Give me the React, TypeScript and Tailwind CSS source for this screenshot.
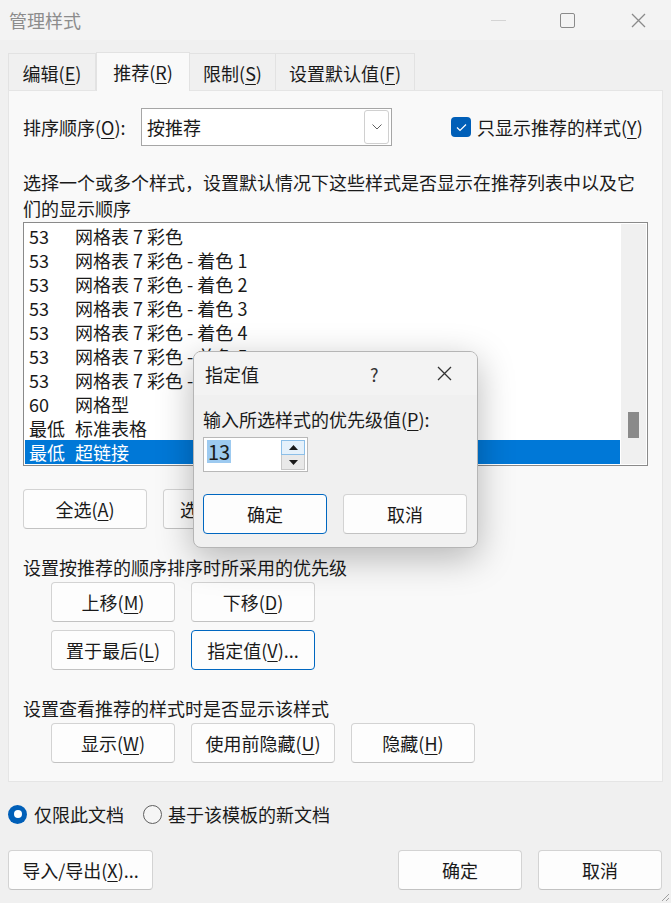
import type { ReactNode } from "react"

const font = "font-['Noto_Sans_CJK_SC','Noto_Sans',sans-serif]"

function Key({ children }: { children: ReactNode }) {
  return <span className="underline decoration-1 underline-offset-[3px]">{children}</span>
}

function Btn({
  children,
  className = "",
  focused = false,
}: {
  children: ReactNode
  className?: string
  focused?: boolean
}) {
  return (
    <div
      className={`flex h-[40px] shrink-0 items-center justify-center rounded-[4px] border bg-[#fdfdfd] text-[18px] leading-[26px] text-[#1a1a1a] ${
        focused ? "border-[#0067c0]" : "border-[#d3d3d3] border-b-[#c2c2c2]"
      } ${className}`}
    >
      {children}
    </div>
  )
}

const tabs = [
  { label: "编辑", key: "E", w: "w-[88px]" },
  { label: "推荐", key: "R", w: "w-[94px]", active: true },
  { label: "限制", key: "S", w: "w-[87px]" },
  { label: "设置默认值", key: "F", w: "w-[140px]" },
]

const rows = [
  { n: "53", name: "网格表 7 彩色" },
  { n: "53", name: "网格表 7 彩色 - 着色 1" },
  { n: "53", name: "网格表 7 彩色 - 着色 2" },
  { n: "53", name: "网格表 7 彩色 - 着色 3" },
  { n: "53", name: "网格表 7 彩色 - 着色 4" },
  { n: "53", name: "网格表 7 彩色 - 着色 5" },
  { n: "53", name: "网格表 7 彩色 - 着色 6" },
  { n: "60", name: "网格型" },
  { n: "最低", name: "标准表格" },
  { n: "最低", name: "超链接", selected: true },
]

export default function App() {
  return (
    <div className={`relative flex h-[903px] w-[671px] flex-col overflow-hidden bg-[#f0f0f0] text-[#1a1a1a] ${font}`}>
      {/* Title bar */}
      <div className="flex h-[40px] shrink-0 items-center bg-[#f3f3f3]">
        <span className="pl-[9px] text-[18px] leading-[26px] text-[#8c8c8c]">管理样式</span>
        <div className="ml-auto flex h-full items-center">
          <div className="mr-[54px] h-px w-[15px] bg-[#d4d4d4]" />
          <div className="mr-[56px] h-[15px] w-[15px] rounded-[2px] border-[1.5px] border-[#8a8a8a]" />
          <svg width="15" height="15" viewBox="0 0 15 15" className="mr-[25px]">
            <path d="M1 1L14 14M14 1L1 14" stroke="#8a8a8a" strokeWidth="1.3" />
          </svg>
        </div>
      </div>

      {/* Tabs */}
      <div className="ml-[8px] mt-[12px] flex h-[38px] shrink-0 items-end">
        {tabs.map((t) =>
          t.active ? (
            <div
              key={t.key}
              className={`relative z-10 -mb-px flex h-[39px] items-center justify-center border border-b-0 border-[#e2e2e2] bg-[#f9f9f9] text-[18px] leading-[26px] ${t.w}`}
            >
              {t.label}(<Key>{t.key}</Key>)
            </div>
          ) : (
            <div
              key={t.key}
              className={`-ml-px flex h-[37px] items-center justify-center border border-b-0 border-[#e2e2e2] bg-[#f0f0f0] pt-[2px] text-[18px] leading-[26px] first:ml-0 ${t.w}`}
            >
              {t.label}(<Key>{t.key}</Key>)
            </div>
          ),
        )}
      </div>

      {/* Panel */}
      <div className="mx-[8px] flex h-[692px] shrink-0 flex-col border border-[#e5e5e5] bg-[#f9f9f9] px-[14px]">
        <div className="mt-[17px] flex h-[38px] items-center">
          <span className="w-[118px] text-[18px] leading-[26px]">
            排序顺序(<Key>O</Key>):
          </span>
          <div className="flex h-[38px] w-[251px] items-center border border-[#a6a6a6] bg-white pl-[5px]">
            <span className="text-[18px] leading-[26px]">按推荐</span>
            <div className="ml-auto mr-[2px] flex h-[34px] w-[25px] items-center justify-center rounded-[3px] border border-[#d0d0d0] bg-white">
              <svg width="10" height="6" viewBox="0 0 10 6">
                <path d="M0.5 0.5L5 5L9.5 0.5" fill="none" stroke="#606060" strokeWidth="1" />
              </svg>
            </div>
          </div>
          <div className="ml-[59px] flex h-[20px] w-[20px] items-center justify-center rounded-[4px] bg-[#005fb8]">
            <svg width="11" height="9" viewBox="0 0 11 9">
              <path d="M1 4.5L4 7.5L10 1.5" fill="none" stroke="white" strokeWidth="1.2" />
            </svg>
          </div>
          <span className="ml-[6px] text-[18px] leading-[26px]">
            只显示推荐的样式(<Key>Y</Key>)
          </span>
        </div>

        <p className="mt-[23px] text-[18px] leading-[26px]">
          选择一个或多个样式，设置默认情况下这些样式是否显示在推荐列表中以及它们的显示顺序
        </p>

        {/* List */}
        <div className="mt-[1px] flex h-[244px] w-[625px] border border-[#8a8a8a] bg-white p-px">
          <div className="flex flex-1 flex-col">
            {rows.map((r, i) => (
              <div
                key={i}
                className={`flex h-[24px] items-center text-[18px] leading-[24px] ${
                  r.selected ? "bg-[#0078d7] text-white" : ""
                }`}
              >
                <span className="w-[50px] pl-[4px]">{r.n}</span>
                <span>{r.name}</span>
              </div>
            ))}
          </div>
          <div className="ml-px flex w-[25px] flex-col items-center bg-[#f0f0f0]">
            <div className="mt-[188px] h-[26px] w-[11px] bg-[#8a8a8a]" />
          </div>
        </div>

        <div className="mt-[23px] flex gap-[16px]">
          <Btn className="w-[124px]">
            全选(<Key>A</Key>)
          </Btn>
          <Btn className="w-[166px]">
            选择内置样式(<Key>B</Key>)
          </Btn>
        </div>

        <p className="mt-[25px] text-[18px] leading-[26px]">设置按推荐的顺序排序时所采用的优先级</p>
        <div className="mt-[2px] flex gap-[16px] pl-[28px]">
          <Btn className="w-[124px]">
            上移(<Key>M</Key>)
          </Btn>
          <Btn className="w-[124px]">
            下移(<Key>D</Key>)
          </Btn>
        </div>
        <div className="mt-[8px] flex gap-[16px] pl-[28px]">
          <Btn className="w-[124px]">
            置于最后(<Key>L</Key>)
          </Btn>
          <Btn className="w-[124px]" focused>
            指定值(<Key>V</Key>)...
          </Btn>
        </div>

        <p className="mt-[25px] text-[18px] leading-[26px]">设置查看推荐的样式时是否显示该样式</p>
        <div className="mt-[2px] flex gap-[16px] pl-[28px]">
          <Btn className="w-[124px]">
            显示(<Key>W</Key>)
          </Btn>
          <Btn className="w-[144px]">
            使用前隐藏(<Key>U</Key>)
          </Btn>
          <Btn className="w-[124px]">
            隐藏(<Key>H</Key>)
          </Btn>
        </div>
      </div>

      {/* Radios */}
      <div className="mt-[19px] flex h-[26px] items-center pl-[8px] text-[18px] leading-[26px]">
        <div className="flex h-[19px] w-[19px] items-center justify-center rounded-full bg-[#005fb8]">
          <div className="h-[8px] w-[8px] rounded-full bg-white" />
        </div>
        <span className="ml-[7px]">仅限此文档</span>
        <div className="ml-[19px] h-[19px] w-[19px] rounded-full border border-[#5f5f5f] bg-[#f5f5f5]" />
        <span className="ml-[6px]">基于该模板的新文档</span>
      </div>

      {/* Bottom buttons */}
      <div className="mt-[23px] flex pl-[8px] pr-[9px]">
        <Btn className="w-[145px]">
          导入/导出(<Key>X</Key>)...
        </Btn>
        <Btn className="ml-auto w-[124px]">确定</Btn>
        <Btn className="ml-[16px] w-[124px]">取消</Btn>
      </div>

      {/* Resize grip */}
      <svg width="9" height="9" viewBox="0 0 9 9" className="absolute bottom-[1px] right-[1px]">
        <path d="M8 1L1 8M8 5L5 8" stroke="#a0a0a0" strokeWidth="1" />
      </svg>

      {/* Assign value dialog */}
      <div className="absolute left-[193px] top-[351px] flex h-[197px] w-[285px] flex-col overflow-hidden rounded-[8px] border border-[#b5b5b5] bg-[#f0f0f0] shadow-[0_10px_36px_rgba(0,0,0,0.28)]">
        <div className="flex h-[43px] shrink-0 items-center bg-[#f3f3f3]">
          <span className="pl-[11px] text-[18px] leading-[26px]">指定值</span>
          <span className="ml-[111px] text-[18px] leading-[26px] text-[#333]">?</span>
          <svg width="15" height="15" viewBox="0 0 15 15" className="ml-[58px]">
            <path d="M1 1L14 14M14 1L1 14" stroke="#333" strokeWidth="1.3" />
          </svg>
        </div>
        <p className="mt-[11px] pl-[9px] text-[18px] leading-[26px]">
          输入所选样式的优先级值(<Key>P</Key>):
        </p>
        <div className="ml-[9px] mt-[5px] flex h-[35px] w-[105px] border border-[#b8b8b8] bg-white">
          <div className="flex flex-1 items-start pl-[3px] pt-[2px]">
            <span className="bg-[#9dcaf0] px-px text-[20px] leading-[23px]">13</span>
          </div>
          <div className="mr-[2px] mt-[2px] flex w-[24px] flex-col">
            <div className="flex h-[15px] items-center justify-center border border-[#8cbfe8] bg-[#e5f1fb]">
              <svg width="9" height="5" viewBox="0 0 9 5">
                <path d="M0 5L4.5 0L9 5Z" fill="#1a1a1a" />
              </svg>
            </div>
            <div className="flex h-[15px] items-center justify-center border border-t-0 border-[#c8c8c8] bg-[#e9e9e9]">
              <svg width="9" height="5" viewBox="0 0 9 5">
                <path d="M0 0L4.5 5L9 0Z" fill="#1a1a1a" />
              </svg>
            </div>
          </div>
        </div>
        <div className="ml-[9px] mt-[22px] flex gap-[16px]">
          <Btn className="w-[124px]" focused>
            确定
          </Btn>
          <Btn className="w-[124px]">取消</Btn>
        </div>
      </div>
    </div>
  )
}
